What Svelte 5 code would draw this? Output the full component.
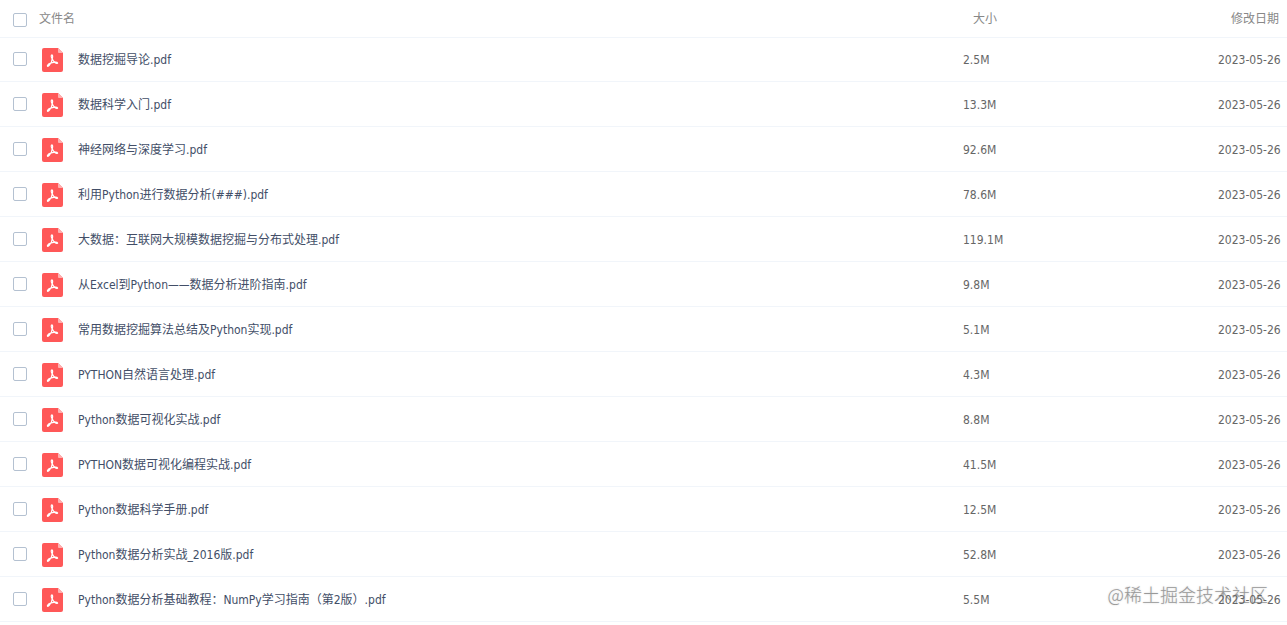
<script lang="ts">
	type PdfFile = { name: string; size: string; date: string };

	const files: PdfFile[] = [
		{ name: '数据挖掘导论.pdf', size: '2.5M', date: '2023-05-26' },
		{ name: '数据科学入门.pdf', size: '13.3M', date: '2023-05-26' },
		{ name: '神经网络与深度学习.pdf', size: '92.6M', date: '2023-05-26' },
		{ name: '利用Python进行数据分析(###).pdf', size: '78.6M', date: '2023-05-26' },
		{ name: '大数据：互联网大规模数据挖掘与分布式处理.pdf', size: '119.1M', date: '2023-05-26' },
		{ name: '从Excel到Python——数据分析进阶指南.pdf', size: '9.8M', date: '2023-05-26' },
		{ name: '常用数据挖掘算法总结及Python实现.pdf', size: '5.1M', date: '2023-05-26' },
		{ name: 'PYTHON自然语言处理.pdf', size: '4.3M', date: '2023-05-26' },
		{ name: 'Python数据可视化实战.pdf', size: '8.8M', date: '2023-05-26' },
		{ name: 'PYTHON数据可视化编程实战.pdf', size: '41.5M', date: '2023-05-26' },
		{ name: 'Python数据科学手册.pdf', size: '12.5M', date: '2023-05-26' },
		{ name: 'Python数据分析实战_2016版.pdf', size: '52.8M', date: '2023-05-26' },
		{ name: 'Python数据分析基础教程：NumPy学习指南（第2版）.pdf', size: '5.5M', date: '2023-05-26' }
	];

	let selected: boolean[] = $state(files.map(() => false));
	let allSelected = $derived(selected.every(Boolean));

	function toggleAll() {
		const next = !allSelected;
		selected = files.map(() => next);
	}
</script>

<div class="file-list" lang="zh-CN">
	<table>
		<thead>
			<tr>
				<th class="name-col">
					<label class="head-label">
						<input type="checkbox" checked={allSelected} onchange={toggleAll} />
						<span>文件名</span>
					</label>
				</th>
				<th class="size-col">大小</th>
				<th class="date-col">修改日期</th>
			</tr>
		</thead>
		<tbody>
			{#each files as file, i}
				<tr>
					<td>
						<label class="file-label">
							<input type="checkbox" bind:checked={selected[i]} />
							<svg class="pdf-icon" viewBox="0 0 21 24" aria-hidden="true">
								<path d="M2 0H16L21 5V22Q21 24 19 24H2Q0 24 0 22V2Q0 0 2 0Z" fill="#ff5858" />
								<path d="M16 0L21 5H17Q16 5 16 4Z" fill="#ffb0b0" />
								<path
									d="M9.9 6.8C8.8 7 9.1 9.2 10.2 10.8C10.2 12.8 9 15.2 7.4 17.2C6.2 18.8 5 18.5 5.6 17.3C6.8 15.5 10 14.5 13 14.2C16 14 16.2 15.5 14.6 15.4C12.6 15.2 11.2 13 10.2 10.8C10.8 9 10.9 6.8 9.9 6.8Z"
									fill="none"
									stroke="#fff"
									stroke-width="1.2"
									stroke-linejoin="round"
								/>
							</svg>
							<span class="file-name">{file.name}</span>
						</label>
					</td>
					<td>{file.size}</td>
					<td>{file.date}</td>
				</tr>
			{/each}
		</tbody>
	</table>
	<div class="watermark">@稀土掘金技术社区</div>
</div>

<style>
	:global(body) {
		background: #fff;
	}
	.file-list {
		position: relative;
		font-family: 'DejaVu Sans Condensed', 'Noto Sans CJK SC', sans-serif;
		font-size: 12px;
		line-height: 18px;
		color: #666;
	}
	table {
		width: 100%;
		table-layout: fixed;
		border-collapse: separate;
		border-spacing: 0;
	}
	th,
	td {
		box-sizing: border-box;
		padding: 0;
		text-align: left;
		white-space: nowrap;
	}
	th {
		height: 37px;
		font-weight: normal;
		color: #888;
	}
	td {
		height: 45px;
		padding-top: 1px;
		border-bottom: 1px solid #f1f5fa;
	}
	tbody tr:first-child td {
		padding-top: 0;
		border-top: 1px solid #f1f5fa;
	}
	.size-col {
		width: 255px;
		padding-left: 10px;
	}
	.date-col {
		width: 69px;
		padding-left: 13px;
	}
	.head-label,
	.file-label {
		display: flex;
		align-items: center;
		padding-left: 13px;
	}
	.head-label {
		gap: 12px;
	}
	.file-label {
		gap: 15px;
	}
	input {
		appearance: none;
		box-sizing: border-box;
		flex: none;
		width: 14px;
		height: 14px;
		margin: 0;
		border: 1px solid #b4c1d1;
		border-radius: 2px;
		background: #fff;
	}
	.head-label input {
		margin-top: 2px;
	}
	.file-label input {
		margin-bottom: 2px;
	}
	input:checked {
		border-color: #09aaff;
		background: #09aaff;
	}
	.pdf-icon {
		flex: none;
		width: 21px;
		height: 24px;
	}
	.file-name {
		color: #424e67;
	}
	/* sits behind the rows, so the dates stay on top */
	.watermark {
		position: absolute;
		right: 19px;
		bottom: 15px;
		z-index: -1;
		font-family: 'Noto Sans CJK SC', sans-serif;
		font-size: 18px;
		font-weight: 300;
		line-height: 26px;
		color: #999;
		text-shadow: 0 0 2px #ccc;
	}
</style>
